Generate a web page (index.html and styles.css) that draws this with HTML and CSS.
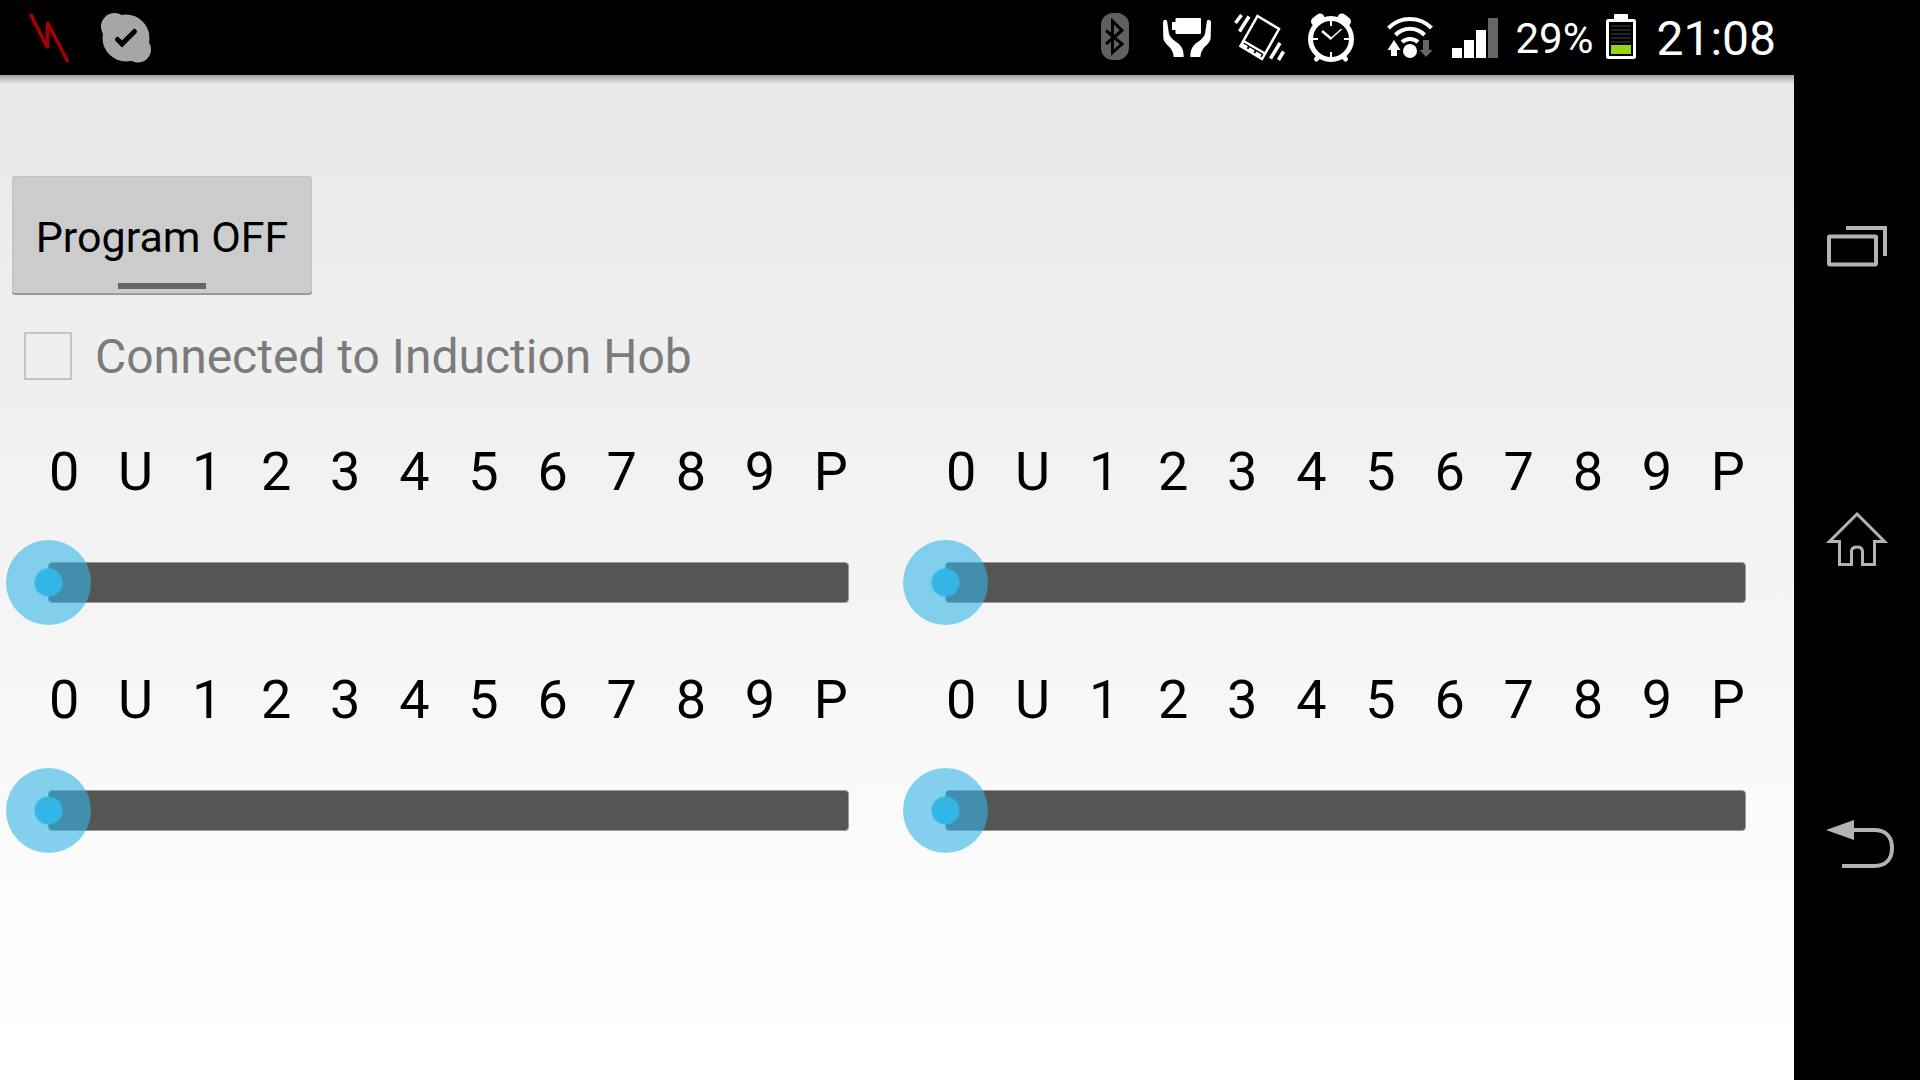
FILE: index.html
```html
<!DOCTYPE html>
<html lang="en">
<head>
<meta charset="utf-8">
<meta name="viewport" content="width=device-width, initial-scale=1">
<title>Induction Hob</title>
<link rel="stylesheet" href="styles.css">
</head>
<body>
<div class="screen">
  <header class="status">
    <svg class="notice" viewBox="0 0 76 75" aria-hidden="true"><path d="M18.500 14 35.500 48V22.500L56 62" fill="none" stroke="#a80000" stroke-width="3.500" stroke-linejoin="bevel"/></svg>
    <svg class="notice" viewBox="0 0 76 75" aria-hidden="true"><g fill="#a6a6a6"><circle cx="38" cy="38" r="23.500"/><circle cx="26.500" cy="26.500" r="13.500"/><circle cx="50" cy="49.500" r="13"/></g><path d="M29.500 39.500 34 44 46.500 31.500" fill="none" stroke="#000" stroke-width="5" stroke-linecap="round"/></svg>
    <span class="spacer"></span>
    <svg class="slot" viewBox="0 0 72 75" aria-hidden="true"><rect x="22" y="13" width="28" height="47" rx="12" fill="#606060"/><path d="M27 30.500 43 44 33.500 52.500V21L43 30.500 27 44" fill="none" stroke="#000" stroke-width="3"/></svg>
    <svg class="slot" viewBox="0 0 72 75" fill="#fff" aria-hidden="true"><rect x="24.500" y="18" width="25.500" height="16" rx="1"/><rect x="21" y="22" width="5" height="8"/><path id="hand" d="M12 22Q13 18.500 16 20.500L18 34Q19 38 28 44 33 49 32.700 57H22.700Q22 51 18.500 47 12.500 42 12.300 38Z"/><use href="#hand" transform="translate(72 0) scale(-1 1)"/></svg>
    <svg class="slot" viewBox="0 0 72 75" fill="none" stroke="#fff" stroke-width="2.500" aria-hidden="true"><path d="M34.500 16 56 29 39 59 17.500 46Z M20.500 41 42 53.500"/><path d="M19 44.500 40.500 57.500" stroke-width="3" stroke-dasharray="6 2"/><path d="M12.500 23 18.500 15M16.500 31.500 26 16.500M47.500 58.500 57 43M55.500 60 60.500 51.500" stroke-width="3.500"/></svg>
    <svg class="slot" viewBox="0 0 72 75" fill="none" stroke="#fff" aria-hidden="true"><circle cx="36" cy="39" r="20.500" stroke-width="5"/><path d="M20.500 21.500 25 18M51.500 21.500 47 18" stroke-width="9" stroke-linecap="round"/><path d="M24 56 21.500 59M48 56 50.500 59" stroke-width="5" stroke-linecap="round"/><path d="M36 21V26M36 52V57M18 39H23M49 39H54" stroke-width="2"/><path d="M27 31 36 38.500" stroke-width="2.500"/><path d="M35 39.500 46.500 29" stroke-width="1.500"/></svg>
    <svg class="slot" viewBox="0 0 72 75" aria-hidden="true"><g fill="none" stroke="#fff" stroke-width="4"><path d="M21.500 28A30 30 0 0 1 64.500 28"/><path d="M28.500 35A20 20 0 0 1 57.500 35"/><path d="M35 42A12 12 0 0 1 51 42"/></g><circle cx="43" cy="51" r="7" fill="#fff"/><path d="M27 40 33.500 50H30V56H24V50H20.500Z" fill="#fff"/><path d="M56 40H62V50H65.500L59 57 52.500 50H56Z" fill="#666"/></svg>
    <svg class="slot" viewBox="0 0 72 75" fill="#fff" aria-hidden="true"><path d="M13 48H23V58H13ZM25 40H35V58H25ZM37 30H47V58H37Z"/><path d="M49 18H59V58H49Z" fill="#666"/></svg>
    <span class="charge">29%</span>
    <svg class="battery" viewBox="0 0 30 75" aria-hidden="true"><path d="M9 14H21Q22 14 22 15V19H8V15Q8 14 9 14Z" fill="#fff"/><rect x="1.500" y="20.500" width="27" height="37" rx="1" fill="#000" stroke="#fff" stroke-width="3"/><path d="M5 26H25M5 30H25M5 34H25M5 38H25M5 42H25" stroke="#222" stroke-width="2"/><rect x="5" y="45" width="20" height="9" fill="#94d60e"/></svg>
    <time class="clock">21:08</time>
  </header>

  <main class="content">
    <button class="toggle" type="button" aria-pressed="false">Program OFF</button>
    <label class="connected"><input type="checkbox" disabled><span>Connected to Induction Hob</span></label>

    <div class="zones">
      <div class="zone">
        <div class="scale"><span>0</span><span>U</span><span>1</span><span>2</span><span>3</span><span>4</span><span>5</span><span>6</span><span>7</span><span>8</span><span>9</span><span>P</span></div>
        <div class="slider"><input type="range" min="0" max="11" value="0" aria-label="Zone 1 power"></div>
      </div>
      <div class="zone">
        <div class="scale"><span>0</span><span>U</span><span>1</span><span>2</span><span>3</span><span>4</span><span>5</span><span>6</span><span>7</span><span>8</span><span>9</span><span>P</span></div>
        <div class="slider"><input type="range" min="0" max="11" value="0" aria-label="Zone 2 power"></div>
      </div>
      <div class="zone">
        <div class="scale"><span>0</span><span>U</span><span>1</span><span>2</span><span>3</span><span>4</span><span>5</span><span>6</span><span>7</span><span>8</span><span>9</span><span>P</span></div>
        <div class="slider"><input type="range" min="0" max="11" value="0" aria-label="Zone 3 power"></div>
      </div>
      <div class="zone">
        <div class="scale"><span>0</span><span>U</span><span>1</span><span>2</span><span>3</span><span>4</span><span>5</span><span>6</span><span>7</span><span>8</span><span>9</span><span>P</span></div>
        <div class="slider"><input type="range" min="0" max="11" value="0" aria-label="Zone 4 power"></div>
      </div>
    </div>
  </main>

  <nav class="keys">
    <button type="button" aria-label="Recent apps"><svg viewBox="0 0 126 100"><rect x="35" y="46.500" width="47" height="28" rx="1"/><path d="M52 38H91V66"/></svg></button>
    <button type="button" aria-label="Home"><svg viewBox="0 0 126 100"><path d="M63 24 90.500 51.500H80.500V74.500H68.500V61Q68 57 63 57 58 57 57.500 61V74.500H45.500V51.500H35.500Z" stroke-width="3"/></svg></button>
    <button type="button" aria-label="Back"><svg viewBox="0 0 126 100"><path d="M32 40 60 30V50Z" fill="#b3b3b3" stroke="none"/><path d="M58 40H80C93 40 98 48 98 58S93 76 80 76H48"/></svg></button>
  </nav>
</div>
</body>
</html>
```
FILE: styles.css
```css
* {
  box-sizing: border-box;
}

body {
  margin: 0;
  background: #000;
  font-family: Roboto, "Noto Sans", sans-serif;
}

.screen {
  display: grid;
  grid-template-columns: 1fr 126px;
  grid-template-rows: 75px 1fr;
  min-height: 100vh;
}

.status {
  display: flex;
  align-items: center;
  padding: 0 18px 0 12px;
  background: #000;
  color: #fff;
}

.status svg {
  flex: none;
  height: 75px;
}

.notice {
  width: 76px;
}

.slot {
  width: 72px;
}

.spacer {
  flex: 1;
}

.charge {
  margin: 0 13px 0 4px;
  padding-top: 3px;
  font-size: 42px;
  line-height: 48px;
}

.battery {
  width: 30px;
}

.clock {
  margin-left: 20px;
  padding-top: 3px;
  font-size: 48px;
  line-height: 56px;
}

.content {
  padding-top: 101px;
  background:
    linear-gradient(rgba(0, 0, 0, .3), rgba(0, 0, 0, 0)) top / 100% 9px no-repeat,
    linear-gradient(#e8e8e8, #fff 96%);
}

.toggle {
  display: block;
  min-width: 300px;
  height: 119px;
  margin-left: 12px;
  padding: 2px 0 0;
  border: 0;
  border-radius: 3px;
  background:
    linear-gradient(#666, #666) center bottom 6px / 88px 6px no-repeat,
    #ccc;
  box-shadow: inset 0 -2px #999, inset 0 0 2px #aaa;
  color: #000;
  font: 43px/48px Roboto, sans-serif;
}

.connected {
  display: flex;
  align-items: center;
  gap: 23px;
  margin: 32px 24px 55px;
  color: #7b7b7b;
  font-size: 48px;
  line-height: 56px;
}

.connected span {
  padding-top: 2px;
}

.connected input {
  appearance: none;
  width: 48px;
  height: 48px;
  margin: 0;
  border: 2px solid #c4c4c4;
}

.zones {
  display: grid;
  grid-template-columns: 1fr 1fr;
  row-gap: 43px;
}

.scale {
  display: flex;
  justify-content: space-between;
  padding: 0 49px;
  font-size: 54px;
  line-height: 64px;
}

.slider {
  display: grid;
  align-items: center;
  margin: 36px 6px 0;
}

.slider::before {
  content: "";
  grid-area: 1 / 1;
  height: 39px;
  margin: 0 42px;
  border: 1px solid #999;
  border-radius: 4px;
  background: #555;
}

.slider input {
  appearance: none;
  z-index: 1;
  grid-area: 1 / 1;
  width: 100%;
  height: 85px;
  margin: 0;
  background: none;
}

.slider input::-webkit-slider-thumb {
  appearance: none;
  width: 85px;
  height: 85px;
  border-radius: 50%;
  background: radial-gradient(circle, #33b5e5 13px, rgba(51, 181, 229, .6) 15px);
}

.keys {
  display: flex;
  grid-area: 1 / 2 / 3 / 3;
  flex-direction: column;
  justify-content: center;
  gap: 200px;
}

.keys button {
  padding: 0;
  border: 0;
  background: none;
}

.keys svg {
  display: block;
  width: 126px;
  height: 100px;
  fill: none;
  stroke: #b3b3b3;
  stroke-width: 4;
}
```
